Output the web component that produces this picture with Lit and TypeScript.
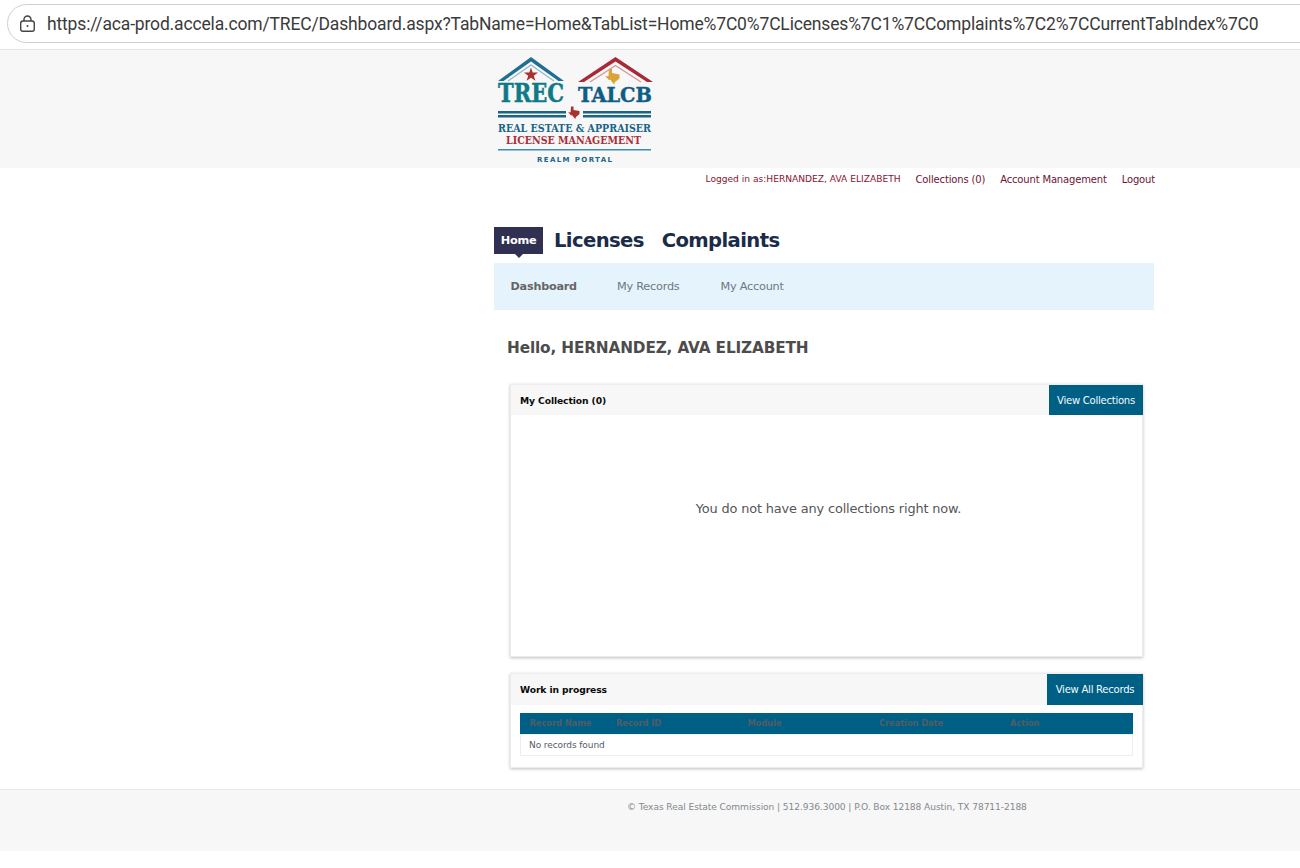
import { LitElement, html, css } from "lit";
import { customElement } from "lit/decorators.js";

const UI = css`"DejaVu Sans", sans-serif`;

@customElement("app-root")
export class AppRoot extends LitElement {
  static styles = css`
    :host { display: block; width: 1300px; height: 868px; overflow: hidden; background: #fff; font-family: ${UI}; }
    .chrome { border-bottom: 1px solid #e4e4e4; padding: 4px 0 0 7px; box-sizing: border-box; height: 50px; }
    .pill { display: flex; align-items: center; height: 39px; width: 1320px; box-sizing: border-box; border: 1px solid #cfcfcf; border-radius: 20px; padding-left: 11px; background: #fff; }
    .pill svg { flex: none; width: 17px; height: 18px; margin-right: 11px; }
    .url { font: 17.5px Roboto, sans-serif; letter-spacing: -0.16px; color: #3b3b3b; white-space: nowrap; }
    .band { height: 118px; background: #f7f7f7; padding: 4px 0 0 497px; box-sizing: border-box; }
    .logo { display: block; width: 156px; height: 110px; overflow: visible; }
    .col { width: 660px; margin-left: 494px; }
    .top { display: flex; justify-content: flex-end; align-items: center; height: 22px; margin-right: -1px; color: #7f1734; font-size: 10px; white-space: nowrap; }
    .top .who { font-size: 9.1px; color: #8a1530; }
    .top a { margin-left: 15px; color: #6f1332; letter-spacing: -0.16px; }
    .tabs { display: flex; align-items: center; height: 27px; margin-top: 37px; color: #1b2c48; font-weight: 700; font-size: 19.6px; white-space: nowrap; letter-spacing: -0.62px; }
    .home { position: relative; display: flex; align-items: center; justify-content: center; width: 49px; height: 27px; background: #2f3052; color: #fff; font-size: 11.3px; letter-spacing: -0.25px; margin-right: 11px; }
    .home::after { content: ""; position: absolute; left: 21px; bottom: -4px; border: 4px solid transparent; border-bottom: 0; border-top-color: #2f3052; }
    .tabs .t2 { margin-left: 18px; }
    .sub { display: flex; align-items: center; height: 47px; margin-top: 9px; background: #e5f4fc; padding-left: 16.5px; font-size: 11.3px; color: #6f7684; white-space: nowrap; }
    .sub b { color: #666; font-size: 11.2px; width: 106.5px; letter-spacing: -0.2px; }
    .sub span { width: 103.5px; letter-spacing: -0.25px; }
    h1 { margin: 28px 0 0 13px; font-size: 15.3px; line-height: 20px; color: #4c4c4c; font-weight: 700; letter-spacing: -0.15px; white-space: nowrap; }
    .card { margin: 26px 0 0 16px; width: 633px; box-sizing: border-box; background: #fff; border: 1px solid #ececec; border-top-color: #eee; box-shadow: 0 1px 3px rgba(0,0,0,.25); }
    .card.one { height: 273px; }
    .card.two { height: 95px; margin-top: 16px; }
    .head { display: flex; justify-content: space-between; background: #f7f7f7; height: 30px; margin-right: -1px; }
    .two .head { height: 31px; }
    .head strong { align-self: center; margin-left: 9px; font-size: 9.2px; color: #0a0a0a; letter-spacing: -0.1px; white-space: nowrap; }
    .btn { display: flex; align-items: center; justify-content: center; background: #005f85; color: #f2fbff; font-size: 10.1px; white-space: nowrap; letter-spacing: -0.28px; width: 94px; height: 30px; }
    .two .btn { width: 96px; height: 31px; }
    .empty { text-align: center; font-size: 12.9px; color: #555; letter-spacing: -0.15px; margin-top: 85px; padding-left: 4px; line-height: 17px; }
    .table { margin: 8px 9px 0 9px; }
    .thead { display: grid; grid-template-columns: 86.5px 131.5px 131.5px 131px 1fr; align-items: center; height: 21px; box-sizing: border-box; padding: 0 0 2px 9.5px; background: #005f85; color: #4f5e66; font-size: 8.4px; font-weight: 700; white-space: nowrap; letter-spacing: -0.1px; }
    .tbody { height: 22px; box-sizing: border-box; border: 1px solid #eee; border-top: 1px solid #f0f0f0; padding-left: 8px; display: flex; align-items: center; font-size: 9px; color: #555b66; letter-spacing: -0.1px; white-space: nowrap; }
    .foot { margin-top: 21px; height: 62px; box-sizing: border-box; border-top: 1px solid #e8e8e8; background: #f7f7f7; padding: 10px 0 0 627px; font-size: 9.1px; line-height: 14px; color: #83888e; white-space: nowrap; letter-spacing: -0.08px; }
  `;

  logo() {
    return html`<svg class="logo" viewBox="0 0 156 110" aria-label="TREC TALCB logo">
      <path d="M1 27 L34 3 L67 27 L61.500 27 L34 7.500 L6.500 27 Z" fill="#1f6f94"/>
      <path d="M11 27 L34 11 L57 27" fill="none" stroke="#8fb9cc" stroke-width="1.300"/>
      <path d="M81 28 L118.500 3 L156 28 L150 28 L118.500 7.500 L87 28 Z" fill="#a82a35"/>
      <path d="M93 28 L118.500 11.500 L144 28" fill="none" stroke="#d5949a" stroke-width="1.300"/>
      <polygon fill="#a8322f" points="34,13.500 35.700,18.500 41,18.500 36.800,21.700 38.400,26.700 34,23.700 29.600,26.700 31.200,21.700 27,18.500 32.300,18.500"/>
      <path fill="#dba338" d="M112 15 h3 v4 l3.500 .8 l4 .7 v4 l-2.500 2 l-2 1.500 l-.7 2.500 l-2.300 -2.500 l-1.500 -2.200 l-2 0 l-1.300 -1.800 l-2.200 -1.500 l3.500 -.5 z"/>
      <text x="1" y="48" font-family="DejaVu Serif" font-weight="700" font-size="26" fill="#0e7a87" stroke="#0e7a87" stroke-width=".5" textLength="66" lengthAdjust="spacingAndGlyphs">TREC</text>
      <text x="81" y="48" font-family="DejaVu Serif" font-weight="700" font-size="21" fill="#0f5c85" stroke="#0f5c85" stroke-width=".4" textLength="74" lengthAdjust="spacingAndGlyphs">TALCB</text>
      <g fill="#1a6488">
        <rect x="1" y="57" width="68" height="2.500"/><rect x="1" y="61" width="68" height="2.500"/>
        <rect x="86" y="57" width="68" height="2.500"/><rect x="86" y="61" width="68" height="2.500"/>
      </g>
      <path fill="#a8322f" d="M74 52.500 h2.500 v3.500 l3 .6 l3 .5 v3 l-2 1.600 l-1.600 1.200 l-.6 2.100 l-1.800 -2.100 l-1.200 -1.700 l-1.600 0 l-1 -1.400 l-1.700 -1.200 l2.600 -.4 z"/>
      <text x="1" y="77.500" font-family="DejaVu Serif" font-weight="700" font-size="11" fill="#1a6488" textLength="153" lengthAdjust="spacingAndGlyphs">REAL ESTATE &amp; APPRAISER</text>
      <text x="9" y="90" font-family="DejaVu Serif" font-weight="700" font-size="11" fill="#a82f3a" textLength="135" lengthAdjust="spacingAndGlyphs">LICENSE MANAGEMENT</text>
      <rect x="1" y="95" width="153" height="1.500" fill="#3d8bb0"/>
      <text x="40" y="107.500" font-family="DejaVu Sans" font-weight="700" font-size="7" fill="#1a6488" textLength="75" lengthAdjust="spacing">REALM PORTAL</text>
    </svg>`;
  }

  render() {
    return html`
      <div class="chrome">
        <div class="pill">
          <svg viewBox="0 0 17 18" fill="none" stroke="#444" stroke-width="1.400">
            <rect x="1.700" y="6" width="13.600" height="10.300" rx="2.200"/>
            <path d="M5 6 V4.500 a3.500 3.500 0 0 1 7 0 V6"/>
            <circle cx="8.500" cy="11" r="1" fill="#444" stroke="none"/>
          </svg>
          <span class="url">https://aca-prod.accela.com/TREC/Dashboard.aspx?TabName=Home&amp;TabList=Home%7C0%7CLicenses%7C1%7CComplaints%7C2%7CCurrentTabIndex%7C0</span>
        </div>
      </div>
      <div class="band">${this.logo()}</div>
      <div class="col">
        <div class="top">
          <span class="who">Logged in as:HERNANDEZ, AVA ELIZABETH</span>
          <a>Collections (0)</a><a>Account Management</a><a>Logout</a>
        </div>
        <div class="tabs">
          <span class="home">Home</span><span>Licenses</span><span class="t2">Complaints</span>
        </div>
        <div class="sub"><b>Dashboard</b><span>My Records</span><span>My Account</span></div>
        <h1>Hello, HERNANDEZ, AVA ELIZABETH</h1>
        <section class="card one">
          <div class="head"><strong>My Collection (0)</strong><div class="btn">View Collections</div></div>
          <div class="empty">You do not have any collections right now.</div>
        </section>
        <section class="card two">
          <div class="head"><strong>Work in progress</strong><div class="btn">View All Records</div></div>
          <div class="table">
            <div class="thead"><span>Record Name</span><span>Record ID</span><span>Module</span><span>Creation Date</span><span>Action</span></div>
            <div class="tbody">No records found</div>
          </div>
        </section>
      </div>
      <div class="foot">© Texas Real Estate Commission | 512.936.3000 | P.O. Box 12188 Austin, TX 78711-2188</div>
    `;
  }
}
